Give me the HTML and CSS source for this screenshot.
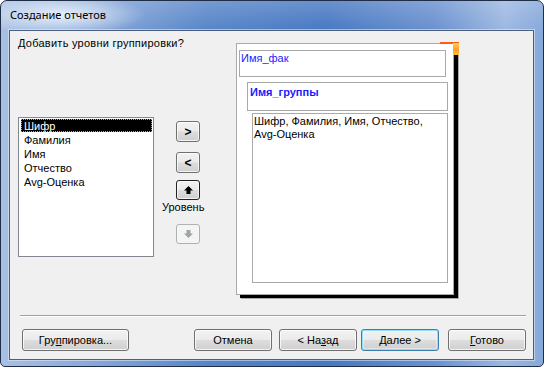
FILE: index.html
```html
<!DOCTYPE html>
<html lang="ru">
<head>
    <meta charset="UTF-8">
    <title>Создание отчетов</title>
    <link rel="stylesheet" href="styles.css">
</head>
<body>
    <div class="window">
        <div class="titlebar">Создание отчетов</div>
        <div class="client">
            <div class="wizard">
                <div class="question">Добавить уровни группировки?</div>
                <ul class="fields">
                    <li class="selected">Шифр</li>
                    <li>Фамилия</li>
                    <li>Имя</li>
                    <li>Отчество</li>
                    <li>Avg-Оценка</li>
                </ul>
                <div class="level-buttons">
                    <button class="small-btn">&gt;</button>
                    <button class="small-btn gap-less">&lt;</button>
                    <button class="small-btn dark">
                        <svg width="9" height="8" viewBox="0 0 9 8"><polygon points="4.5,0 9,4.5 6.5,4.5 6.5,8 2.5,8 2.5,4.5 0,4.5" fill="#000"/></svg>
                    </button>
                    <span class="level-label">Уровень</span>
                    <button class="small-btn disabled">
                        <svg width="9" height="8" viewBox="0 0 9 8"><polygon points="2.5,0 6.5,0 6.5,3.5 9,3.5 4.5,8 0,3.5 2.5,3.5" fill="#a3a3a3"/></svg>
                    </button>
                </div>
                <div class="preview">
                    <span class="preview-mark"></span>
                    <div class="group group-fac">Имя_фак</div>
                    <div class="group group-grp">Имя_группы</div>
                    <div class="group group-detail">Шифр, Фамилия, Имя, Отчество,<br>Avg-Оценка</div>
                </div>
            </div>
            <div class="separator"></div>
            <div class="actions">
                <button class="btn btn-wide">Гру<u>п</u>пировка...</button>
                <button class="btn btn-cancel">Отмена</button>
                <button class="btn btn-back">&lt; На<u>з</u>ад</button>
                <button class="btn btn-next default"><u>Д</u>алее &gt;</button>
                <button class="btn"><u>Г</u>отово</button>
            </div>
        </div>
    </div>
</body>
</html>
```

FILE: styles.css
```css
/* General */
* {
    box-sizing: border-box;
    margin: 0;
    padding: 0;
}

body {
    width: 544px;
    height: 367px;
    background: #ffffff;
    font-family: 'Liberation Sans', Arial, sans-serif;
    font-size: 11px;
    line-height: 13px;
    color: #000;
    overflow: hidden;
}

/* Aero window frame */
.window {
    width: 544px;
    height: 367px;
    border: 1px solid #1f2e46;
    border-radius: 7px 7px 5px 5px;
    padding: 0 9px 6px 8px;
    display: flex;
    flex-direction: column;
    background:
        radial-gradient(ellipse 85px 20px at 60px 14px, rgba(236, 243, 251, 0.95), rgba(236, 243, 251, 0) 100%),
        linear-gradient(180deg, rgba(255, 255, 255, 0.18) 0%, rgba(255, 255, 255, 0) 30px),
        linear-gradient(90deg, #a8c0e4 0%, #8aa9da 16%, #5785c8 38%, #4778c2 60%, #6a91cf 80%, #9cb8e1 93%, #87a8da 100%);
}

.titlebar {
    height: 29px;
    padding: 6px 0 0 1px;
    font-family: 'Noto Sans', 'DejaVu Sans', sans-serif;
    font-size: 11px;
    line-height: 15px;
    color: #000;
}

.client {
    flex: 1;
    display: flex;
    flex-direction: column;
    background: #f0f0f0;
    border: 1px solid #4c5f7f;
    box-shadow: 0 0 0 1px rgba(230, 238, 248, 0.55);
}

/* Wizard body */
.wizard {
    flex: 1;
    display: grid;
    grid-template-columns: 136px 82px 222px;
    grid-template-rows: 13px auto;
    padding: 6px 0 0 8px;
}

.question {
    grid-column: 1 / 3;
    grid-row: 1;
    white-space: nowrap;
    letter-spacing: 0.25px;
}

.fields {
    grid-column: 1;
    grid-row: 2;
    list-style: none;
    margin-top: 67px;
    height: 140px;
    background: #fff;
    border: 1px solid #828790;
    padding: 1px 1px 0 1px;
    align-self: start;
}

.fields li {
    height: 14px;
    line-height: 12px;
    padding: 0 0 0 2px;
    border: 1px solid transparent;
    margin-left: 1px;
}

.fields li.selected {
    background: #000;
    color: #fff;
    height: 13px;
    margin-bottom: 1px;
    border: 1px dotted #a8a8a8;
}

.level-buttons {
    grid-column: 2;
    grid-row: 2;
    margin-top: 71px;
    padding-left: 22px;
    display: flex;
    flex-direction: column;
    align-items: flex-start;
    align-self: start;
}

.small-btn {
    width: 24px;
    height: 21px;
    border: 1px solid #707070;
    border-radius: 3px;
    background: linear-gradient(#f2f2f2 0%, #ebebeb 48%, #dddddd 52%, #cfcfcf 100%);
    box-shadow: inset 0 0 0 1px rgba(255, 255, 255, 0.75);
    font-family: 'Liberation Sans', Arial, sans-serif;
    font-size: 12px;
    font-weight: bold;
    color: #000;
    display: flex;
    align-items: center;
    justify-content: center;
}

.small-btn + .small-btn {
    margin-top: 10px;
}

.small-btn.dark {
    margin-top: 7px;
    height: 20px;
    border-color: #222;
}

.small-btn.disabled {
    height: 20px;
    margin-top: 10px;
    border-color: #adb2b5;
    background: #f4f4f4;
    box-shadow: none;
}

.level-label {
    margin: 1px 0 0 -14px;
    line-height: 13px;
}

/* Report preview */
.preview {
    grid-column: 3;
    grid-row: 1 / 3;
    position: relative;
    margin-top: 6px;
    width: 218px;
    height: 252px;
    align-self: start;
    background: #fff;
    border: 1px solid #a9a9a9;
    box-shadow: 4px 3px 0 #000, 5px 4px 0 #a9a9a9;
}

.preview-mark {
    position: absolute;
    right: -6px;
    top: -2px;
    width: 19px;
    height: 2px;
    background: #ff5a1a;
}

.preview-mark::after {
    content: "";
    position: absolute;
    right: 0;
    top: 1px;
    width: 6px;
    height: 12px;
    background: linear-gradient(#ffd24a, #ff9a2a 60%, #ffbe40);
}

.group {
    border: 1px solid #a9a9a9;
    color: #1a1aff;
}

.group-fac {
    margin: 6px 0 0 2px;
    width: 207px;
    height: 27px;
    padding: 1px 0 0 1px;
}

.group-grp {
    margin: 5px 0 0 10px;
    width: 201px;
    height: 29px;
    padding: 3px 0 0 2px;
    font-weight: bold;
}

.group-detail {
    margin: 2px 0 0 15px;
    width: 196px;
    height: 170px;
    padding: 1px 0 0 1px;
    color: #000;
}

/* Bottom buttons */
.separator {
    height: 2px;
    margin: 0 7px 0 10px;
    border-top: 1px solid #a0a0a0;
    border-bottom: 1px solid #ffffff;
}

.actions {
    display: flex;
    margin-top: 12px;
    padding: 0 7px 8px 12px;
}

.btn {
    width: 78px;
    height: 22px;
    border: 1px solid #707070;
    border-radius: 3px;
    background: linear-gradient(#f2f2f2 0%, #ebebeb 48%, #dddddd 52%, #cfcfcf 100%);
    box-shadow: inset 0 0 0 1px rgba(255, 255, 255, 0.75);
    font-family: 'Liberation Sans', Arial, sans-serif;
    font-size: 11px;
    color: #000;
}

.btn u {
    text-decoration-thickness: 1px;
    text-underline-offset: 1px;
}

.btn-wide {
    width: 107px;
}

.btn-cancel {
    margin-left: auto;
    margin-right: 7px;
}

.btn-back {
    margin-right: 4px;
}

.btn-next {
    margin-right: 9px;
}

.btn.default {
    border-color: #3c7fb1;
    box-shadow: inset 0 0 0 1px #8fdcf7, inset 0 0 0 2px rgba(255, 255, 255, 0.4);
}
```
